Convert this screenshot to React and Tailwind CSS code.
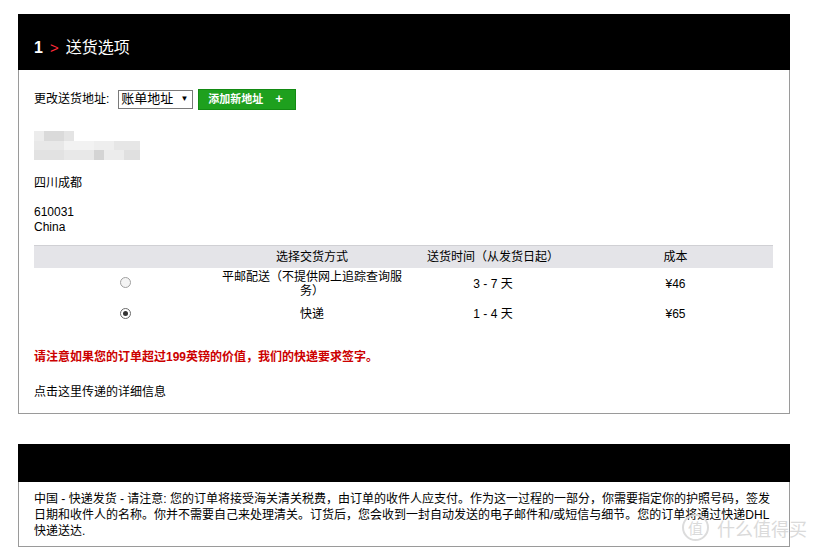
import React from "react";

const font = { fontFamily: '"Liberation Sans", "Noto Sans CJK SC", sans-serif' };

export default function App() {
  return (
    <div className="relative w-[816px] h-[559px] bg-white overflow-hidden text-[12px] text-black" style={font}>
      <div className="pt-[14px] pl-[18px]">
        {/* Panel 1 */}
        <div className="w-[772px] border-x border-b border-[#9a9a9a]">
          <div className="h-[56px] bg-black -mx-px flex items-end pb-[13px] pl-[16px]">
            <span className="text-white font-bold text-[16px] leading-[18px]">1</span>
            <span className="text-[#ff2a3a] text-[15px] leading-[18px] ml-[7px]">&gt;</span>
            <span className="text-white text-[16px] leading-[18px] ml-[7px]">送货选项</span>
          </div>
          <div className="pl-[15px] pr-[16px] pt-[18px] pb-[13px]">
            <div className="flex items-center h-[22px]">
              <span>更改送货地址:</span>
              <div className="ml-[9px] w-[75px] h-[19px] border border-[#7a7a7a] flex items-center justify-between pl-[2px] pr-[4px] text-[13px]">
                <span>账单地址</span>
                <span className="text-[8px]">▼</span>
              </div>
              <div className="ml-[5px] w-[98px] h-[21px] bg-[#1ea01e] border border-[#138a13] flex items-center pl-[9px] text-white font-bold text-[11px]">
                <span>添加新地址</span>
                <span className="ml-[12px] text-[13px]">+</span>
              </div>
            </div>
            {/* blurred name */}
            <div className="mt-[20px] h-[32px] relative w-[110px]">
              <div className="absolute left-0 top-[1px] flex">
                <div className="w-[10px] h-[10px] bg-[#ececec]" />
                <div className="w-[20px] h-[10px] bg-[#dadada]" />
                <div className="w-[10px] h-[10px] bg-[#e4e4e4]" />
              </div>
              <div className="absolute left-0 top-[11px] flex">
                <div className="w-[30px] h-[9px] bg-[#e8e8e8]" />
                <div className="w-[30px] h-[9px] bg-[#f2f2f2]" />
                <div className="w-[20px] h-[9px] bg-[#eeeeee]" />
                <div className="w-[26px] h-[9px] bg-[#e6e6e6]" />
              </div>
              <div className="absolute left-0 top-[20px] flex">
                <div className="w-[30px] h-[10px] bg-[#e2e2e2]" />
                <div className="w-[30px] h-[10px] bg-[#e8e8e8]" />
                <div className="w-[10px] h-[10px] bg-[#d4d4d4]" />
                <div className="w-[20px] h-[10px] bg-[#ececec]" />
                <div className="w-[16px] h-[10px] bg-[#e0e0e0]" />
              </div>
            </div>
            <div className="mt-[13px] leading-[16px]">四川成都</div>
            <div className="mt-[14px] leading-[15px]">610031</div>
            <div className="leading-[15px]">China</div>

            {/* table */}
            <div className="mt-[10px] w-[739px]">
              <div className="grid grid-cols-[182px_192px_170px_195px] h-[23px] bg-[#e4e4e8] border-t border-[#d0d0d4] items-center">
                <div />
                <div className="text-center">选择交货方式</div>
                <div className="text-center">送货时间（从发货日起）</div>
                <div className="text-center">成本</div>
              </div>
              <div className="grid grid-cols-[182px_192px_170px_195px] items-center h-[32px]">
                <div className="flex justify-center -mt-[3px]">
                  <div className="w-[11px] h-[11px] rounded-full border border-[#a0a0a0] bg-[#f4f4f4]" />
                </div>
                <div className="text-center leading-[14px] px-[3px]">平邮配送（不提供网上追踪查询服务）</div>
                <div className="text-center">3 - 7 天</div>
                <div className="text-center">¥46</div>
              </div>
              <div className="grid grid-cols-[182px_192px_170px_195px] items-center h-[27px]">
                <div className="flex justify-center">
                  <div className="w-[11px] h-[11px] rounded-full border border-[#6a6a6a] bg-white flex items-center justify-center">
                    <div className="w-[5px] h-[5px] rounded-full bg-[#333]" />
                  </div>
                </div>
                <div className="text-center">快递</div>
                <div className="text-center">1 - 4 天</div>
                <div className="text-center">¥65</div>
              </div>
            </div>

            <div className="mt-[22px] text-[#cc0000] font-bold leading-[16px]">请注意如果您的订单超过199英镑的价值，我们的快递要求签字。</div>
            <div className="mt-[19px] leading-[16px]">点击这里传递的详细信息</div>
          </div>
        </div>

        {/* Panel 2 */}
        <div className="mt-[30px] w-[772px] border-x border-b border-[#9a9a9a]">
          <div className="h-[38px] bg-black -mx-px" />
          <div className="pl-[15px] pr-[12px] pt-[9px] pb-[7px] leading-[16px]">
            中国 - 快递发货 - 请注意: 您的订单将接受海关清关税费，由订单的收件人应支付。作为这一过程的一部分，你需要指定你的护照号码，签发日期和收件人的名称。你并不需要自己来处理清关。订货后，您会收到一封自动发送的电子邮件和/或短信与细节。您的订单将通过快递DHL快递送达.
          </div>
        </div>
      </div>

      {/* watermark */}
      <div className="absolute left-[682px] top-[514px] flex items-center whitespace-nowrap text-[#dadada]" style={{ fontFamily: '"Noto Sans CJK SC", sans-serif' }}>
        <div className="w-[27px] h-[27px] rounded-full border-2 border-[#dcdcdc] flex items-center justify-center text-[15px] leading-none">值</div>
        <span className="ml-[8px] text-[18px] leading-none">什么值得买</span>
      </div>
    </div>
  );
}
